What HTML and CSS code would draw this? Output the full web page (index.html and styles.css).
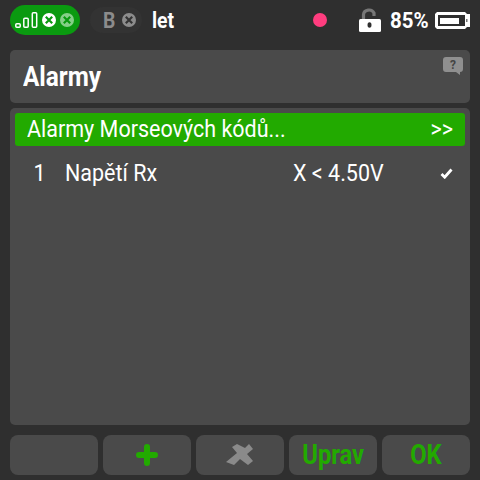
FILE: index.html
```html
<!DOCTYPE html>
<html lang="cs">
<head>
    <meta charset="UTF-8">
    <meta name="viewport" content="width=device-width, initial-scale=1.0">
    <title>Alarmy</title>
    <link rel="stylesheet" href="styles.css">
</head>
<body>
    <div class="screen">
        <div class="topbar">
            <div class="pill pill-green">
                <svg class="signal" width="24" height="16" viewBox="0 0 24 16">
                    <rect x="1.800" y="11.800" width="4.400" height="3.400" rx="1" fill="none" stroke="#fff" stroke-width="1.500"/>
                    <rect x="9.800" y="6.300" width="4.400" height="8.900" rx="1" fill="none" stroke="#fff" stroke-width="1.500"/>
                    <rect x="18.300" y="0.800" width="4.400" height="14.400" rx="1" fill="none" stroke="#fff" stroke-width="1.500"/>
                </svg>
                <svg width="14" height="14" viewBox="0 0 14 14">
                    <circle cx="7" cy="7" r="7" fill="#fff"/>
                    <path d="M3.800 3.800l6.400 6.400M10.200 3.800l-6.400 6.400" stroke="#0a9a10" stroke-width="2.200"/>
                </svg>
                <svg width="14" height="14" viewBox="0 0 14 14">
                    <circle cx="7" cy="7" r="7" fill="#85cf88"/>
                    <path d="M3.800 3.800l6.400 6.400M10.200 3.800l-6.400 6.400" stroke="#0a9a10" stroke-width="2.200"/>
                </svg>
            </div>
            <div class="pill pill-dark">
                <span class="pill-letter">B</span>
                <svg width="14" height="14" viewBox="0 0 14 14">
                    <circle cx="7" cy="7" r="7" fill="#8c8c8c"/>
                    <path d="M3.800 3.800l6.400 6.400M10.200 3.800l-6.400 6.400" stroke="#333" stroke-width="2.200"/>
                </svg>
            </div>
            <span class="model">let</span>
            <span class="rec-dot"></span>
            <svg class="lock" width="22" height="24" viewBox="0 0 22 24">
                <path d="M4.500 12V6.500a5.500 5 0 0 1 10.500 -1.500V8" fill="none" stroke="#777" stroke-width="3.200"/>
                <rect x="0" y="11" width="22" height="13" rx="1.500" fill="#fff"/>
                <ellipse cx="10.500" cy="17" rx="2" ry="2.800" fill="#2f2f2f"/>
            </svg>
            <span class="percent">85%</span>
            <svg class="battery" width="35" height="17" viewBox="0 0 35 17">
                <path d="M2 0H30L32 2H35V15H32L30 17H2L0 15V2z" fill="#fff"/>
                <rect x="3" y="3" width="27" height="11" fill="#2f2f2f"/>
                <rect x="5" y="6" width="19" height="6" fill="#fff"/>
                <rect x="31" y="7" width="1.500" height="3" fill="#777"/>
            </svg>
        </div>

        <div class="card title-card">
            <h1>Alarmy</h1>
            <svg class="help" width="20" height="18" viewBox="0 0 20 18">
                <path d="M3 0h14a3 3 0 0 1 3 3v9a3 3 0 0 1-3 3v3l-4-3H3a3 3 0 0 1-3-3V3a3 3 0 0 1 3-3z" fill="#8f8f8f"/>
                <text x="10" y="12" text-anchor="middle" class="help-mark">?</text>
            </svg>
        </div>

        <div class="card list-card">
            <div class="row row-active">
                <span class="row-label">Alarmy Morseových kódů...</span>
                <span class="row-more">&gt;&gt;</span>
            </div>
            <div class="row">
                <span class="row-num">1</span>
                <span class="row-name">Napětí Rx</span>
                <span class="row-cond">X &lt; 4.50V</span>
                <svg class="check" width="13" height="11" viewBox="0 0 13 11">
                    <path d="M1.500 6l3.200 3.200L11.500 1.500" fill="none" stroke="#fff" stroke-width="2.800"/>
                </svg>
            </div>
        </div>

        <div class="buttons">
            <div class="btn"></div>
            <div class="btn">
                <svg width="22" height="22" viewBox="0 0 22 22">
                    <path d="M11 3v16M3 11h16" stroke="#22aa00" stroke-width="6" stroke-linecap="round"/>
                </svg>
            </div>
            <div class="btn">
                <svg width="28" height="22" viewBox="0 0 28 22">
                    <path d="M6 3L11 0L19 4L23 0L27 5L21 10L27 17L22 21L14 15L8 21L0 18L11 9z" fill="#8a8a8a"/>
                </svg>
            </div>
            <div class="btn"><span class="btn-text">Uprav</span></div>
            <div class="btn"><span class="btn-text">OK</span></div>
        </div>
    </div>
</body>
</html>
```

FILE: styles.css
```css
* {
    margin: 0;
    padding: 0;
    box-sizing: border-box;
}

body {
    width: 480px;
    height: 480px;
    overflow: hidden;
    background: #2f2f2f;
    font-family: Roboto, sans-serif;
    color: #fff;
}

.screen {
    display: flex;
    flex-direction: column;
    height: 480px;
    padding: 0 10px 5px;
}

.topbar {
    display: flex;
    align-items: center;
    height: 50px;
    padding-bottom: 10px;
}

.pill {
    display: flex;
    align-items: center;
    border-radius: 15px;
}

.pill-green {
    width: 70px;
    height: 30px;
    padding-left: 4px;
    gap: 4px;
    background: #0a9a10;
}

.pill-dark {
    width: 52px;
    height: 26px;
    margin-left: 10px;
    padding-left: 13px;
    gap: 7px;
    background: #333;
}

.pill-letter {
    width: 12px;
    font-size: 22px;
    font-weight: 700;
    color: #8c8c8c;
    transform: scaleX(0.88);
    transform-origin: left;
}

.model {
    width: 24px;
    margin-left: 10px;
    font-size: 22px;
    font-weight: 700;
    transform: scaleX(0.88);
    transform-origin: left;
}

.rec-dot {
    width: 14px;
    height: 14px;
    margin-left: auto;
    border-radius: 50%;
    background: #ff3d7f;
}

.lock {
    margin-left: 32px;
}

.percent {
    width: 45px;
    margin-left: 9px;
    font-size: 22px;
    font-weight: 700;
    white-space: nowrap;
    transform: scaleX(0.93);
    transform-origin: left;
}

.card {
    background: #4a4a4a;
    border-radius: 5px;
}

.title-card {
    display: flex;
    justify-content: space-between;
    height: 53px;
    padding: 6px 7px 0 13px;
}

.title-card h1 {
    font-size: 28px;
    font-weight: 700;
    line-height: 42px;
    transform: scaleX(0.87);
    transform-origin: left;
}

.help {
    margin-top: 1px;
}

.help-mark {
    font-family: Roboto, sans-serif;
    font-size: 12px;
    font-weight: 700;
    fill: #444;
}

.list-card {
    flex: 1;
    margin-top: 5px;
    padding: 5px;
}

.row {
    display: flex;
    align-items: center;
    height: 33px;
    margin-bottom: 11px;
    padding: 0 12px;
    font-size: 23px;
    border-radius: 3px;
}

.row span {
    white-space: nowrap;
    transform: scaleX(0.935);
    transform-origin: left;
}

.row-active {
    justify-content: space-between;
    background: #22aa00;
}

.row-active .row-more {
    transform-origin: right;
}

.row-num {
    width: 38px;
    padding-left: 7px;
}

.row-name {
    width: 228px;
}

.row-cond {
    flex: 1;
}

.check {
    margin-right: 0;
}

.buttons {
    display: grid;
    grid-template-columns: repeat(5, 1fr);
    gap: 5px;
    height: 40px;
    margin-top: 10px;
}

.btn {
    display: flex;
    align-items: center;
    justify-content: center;
    background: #4a4a4a;
    border-radius: 8px;
}

.btn-text {
    font-size: 27px;
    font-weight: 700;
    color: #22aa00;
    transform: scaleX(0.88);
}
```
